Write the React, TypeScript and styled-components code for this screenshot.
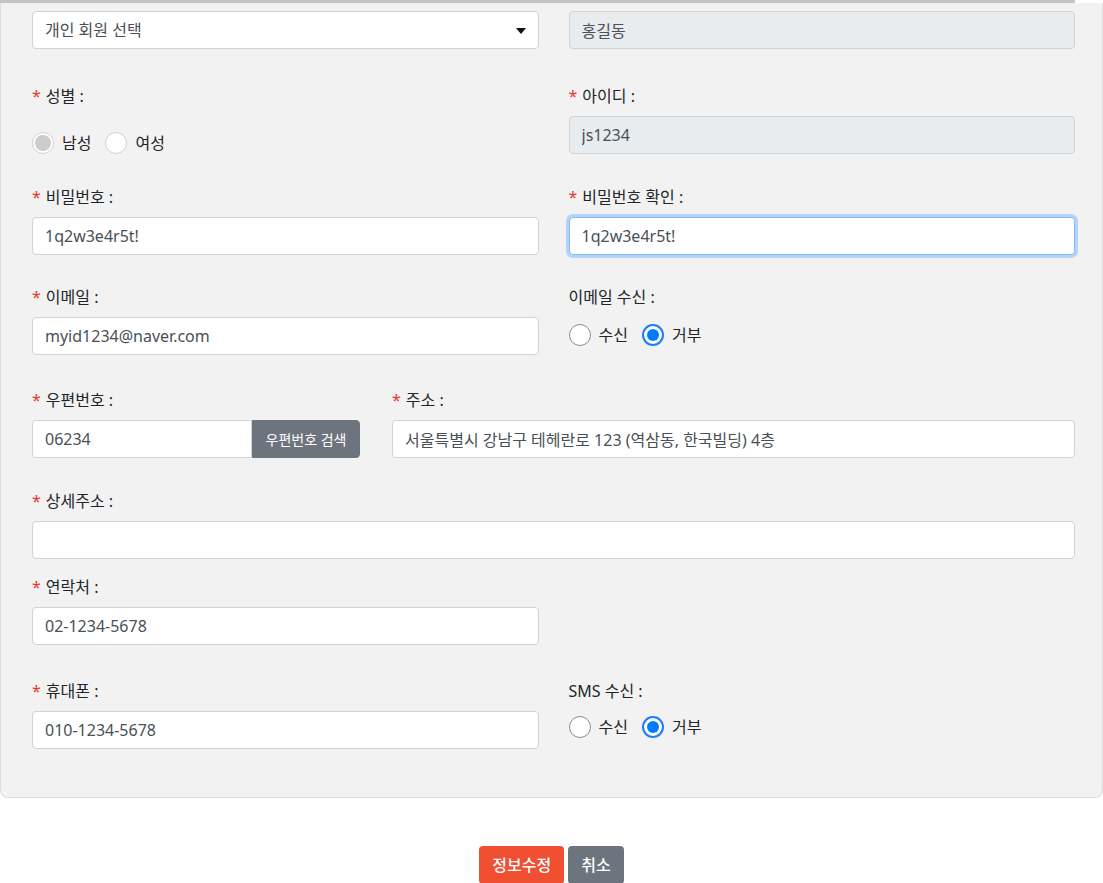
import React, { useEffect, useRef } from 'react'
import styled, { createGlobalStyle, css } from 'styled-components'

const GlobalStyle = createGlobalStyle`
  * {
    box-sizing: border-box;
  }
  body {
    margin: 0;
    background: #ffffff;
    font-family: 'Noto Sans', 'Noto Sans CJK KR', sans-serif;
    color: #212529;
  }
`

type RadioOption = {
  label: string
  checked?: boolean
}

const Radios: React.FC<{ options: RadioOption[]; disabled?: boolean; top: number }> = ({
  options,
  disabled = false,
  top,
}) => (
  <RadioRow $top={top}>
    {options.map((o) => (
      <RadioItem key={o.label}>
        <RadioMark $checked={!!o.checked} $disabled={disabled} />
        <span>{o.label}</span>
      </RadioItem>
    ))}
  </RadioRow>
)

const Label: React.FC<{ required?: boolean; children: React.ReactNode }> = ({ required, children }) => (
  <FieldLabel>
    {required && <Required>*</Required>}
    {children}
  </FieldLabel>
)

const App: React.FC = () => {
  const confirmRef = useRef<HTMLInputElement>(null)

  useEffect(() => {
    const el = confirmRef.current
    if (el) {
      el.focus()
      el.setSelectionRange(el.value.length, el.value.length)
    }
  }, [])

  return (
    <>
      <GlobalStyle />
      <TopStrip />
      <Panel>
        <Row $space={35}>
          <Field>
            <SelectWrap>
              <Select defaultValue="a">
                <option value="a">개인 회원 선택</option>
              </Select>
              <Arrow width="10" height="6" viewBox="0 0 10 6">
                <path d="M0 0h10L5 6z" fill="#111" />
              </Arrow>
            </SelectWrap>
          </Field>
          <Field>
            <TextInput disabled defaultValue="홍길동" $disabled />
          </Field>
        </Row>

        <Row $space={31}>
          <Field>
            <Label required>성별 :</Label>
            <Radios
              disabled
              top={24}
              options={[{ label: '남성', checked: true }, { label: '여성' }]}
            />
          </Field>
          <Field>
            <Label required>아이디 :</Label>
            <TextInput disabled defaultValue="js1234" $disabled />
          </Field>
        </Row>

        <Row $space={30}>
          <Field>
            <Label required>비밀번호 :</Label>
            <TextInput defaultValue="1q2w3e4r5t!" />
          </Field>
          <Field>
            <Label required>비밀번호 확인 :</Label>
            <TextInput ref={confirmRef} defaultValue="1q2w3e4r5t!" $focused />
          </Field>
        </Row>

        <Row $space={33}>
          <Field>
            <Label required>이메일 :</Label>
            <TextInput defaultValue="myid1234@naver.com" />
          </Field>
          <Field>
            <Label>이메일 수신 :</Label>
            <Radios top={15} options={[{ label: '수신' }, { label: '거부', checked: true }]} />
          </Field>
        </Row>

        <Row $space={31} $cols="328px 1fr" $gap={32}>
          <Field>
            <Label required>우편번호 :</Label>
            <InputGroup>
              <TextInput defaultValue="06234" $joined />
              <GroupButton type="button">우편번호 검색</GroupButton>
            </InputGroup>
          </Field>
          <Field>
            <Label required>주소 :</Label>
            <TextInput defaultValue="서울특별시 강남구 테헤란로 123 (역삼동, 한국빌딩) 4층" />
          </Field>
        </Row>

        <Row $space={16} $cols="1fr">
          <Field>
            <Label required>상세주소 :</Label>
            <TextInput defaultValue="" />
          </Field>
        </Row>

        <Row $space={34}>
          <Field>
            <Label required>연락처 :</Label>
            <TextInput defaultValue="02-1234-5678" />
          </Field>
          <Field />
        </Row>

        <Row $space={0}>
          <Field>
            <Label required>휴대폰 :</Label>
            <TextInput defaultValue="010-1234-5678" />
          </Field>
          <Field>
            <Label>SMS 수신 :</Label>
            <Radios top={13} options={[{ label: '수신' }, { label: '거부', checked: true }]} />
          </Field>
        </Row>
      </Panel>

      <ButtonBar>
        <ActionButton type="button" $variant="primary">
          정보수정
        </ActionButton>
        <ActionButton type="button" $variant="secondary">
          취소
        </ActionButton>
      </ButtonBar>
    </>
  )
}

const TopStrip = styled.div`
  height: 3px;
  margin-right: 28px;
  background: #c4c4c4;
`

const Panel = styled.div`
  background: #f2f2f2;
  border: 1px solid #dcdcdc;
  border-top: none;
  border-radius: 0 0 8px 8px;
  padding: 8px 27px 48px 31px;
`

const Row = styled.div<{ $space: number; $cols?: string; $gap?: number }>`
  display: grid;
  grid-template-columns: ${(p) => p.$cols || '1fr 1fr'};
  column-gap: ${(p) => (p.$gap ?? 30)}px;
  margin-bottom: ${(p) => p.$space}px;
`

const Field = styled.div`
  display: flex;
  flex-direction: column;
  min-width: 0;
`

const FieldLabel = styled.label`
  display: block;
  font-size: 16px;
  line-height: 24px;
  color: #212529;
  margin-bottom: 8px;
`

const Required = styled.span`
  color: #e8372c;
  margin-right: 5px;
`

const TextInput = styled.input<{ $disabled?: boolean; $focused?: boolean; $joined?: boolean }>`
  display: block;
  width: 100%;
  height: 38px;
  padding: 6px 12px;
  font-family: inherit;
  font-size: 16px;
  line-height: 24px;
  color: #495057;
  background: #ffffff;
  border: 1px solid #ced4da;
  border-radius: 4px;
  outline: none;
  caret-color: #212529;

  ${(p) =>
    p.$disabled &&
    css`
      background: #e9ecef;
      opacity: 1;
      -webkit-text-fill-color: #495057;
    `}

  ${(p) =>
    p.$focused &&
    css`
      border-color: #80bdff;
      box-shadow: 0 0 0 3px rgba(0, 123, 255, 0.25);
    `}

  ${(p) =>
    p.$joined &&
    css`
      flex: 1;
      border-radius: 4px 0 0 4px;
    `}
`

const SelectWrap = styled.div`
  position: relative;
`

const Select = styled.select`
  display: block;
  width: 100%;
  height: 38px;
  padding: 6px 12px;
  font-family: inherit;
  font-size: 16px;
  color: #495057;
  background: #ffffff;
  border: 1px solid #ced4da;
  border-radius: 4px;
  appearance: none;
  outline: none;
`

const Arrow = styled.svg`
  position: absolute;
  right: 13px;
  top: 17px;
  pointer-events: none;
`

const InputGroup = styled.div`
  display: flex;
`

const GroupButton = styled.button`
  flex: 0 0 108px;
  height: 38px;
  padding: 0 10px;
  font-family: inherit;
  font-size: 14px;
  color: #ffffff;
  background: #6c757d;
  border: 1px solid #6c757d;
  border-radius: 0 4px 4px 0;
  white-space: nowrap;
`

const RadioRow = styled.div<{ $top: number }>`
  display: flex;
  align-items: center;
  gap: 14px;
  margin-top: ${(p) => p.$top - 8}px;
  height: 22px;
`

const RadioItem = styled.label`
  display: flex;
  align-items: center;
  gap: 8px;
  font-size: 16px;
  line-height: 22px;
  color: #212529;
`

const RadioMark = styled.span<{ $checked: boolean; $disabled: boolean }>`
  position: relative;
  width: 22px;
  height: 22px;
  border-radius: 50%;
  background: #ffffff;
  border: 1px solid ${(p) => (p.$disabled ? '#d2d2d2' : p.$checked ? '#1a7cff' : '#8c8c8c')};

  ${(p) =>
    p.$checked &&
    css`
      &::after {
        content: '';
        position: absolute;
        inset: ${p.$disabled ? 2 : 3}px;
        border-radius: 50%;
        background: ${p.$disabled ? '#cccccc' : '#007bff'};
      }
    `}

  ${(p) =>
    p.$checked &&
    !p.$disabled &&
    css`
      border-width: 2px;
    `}
`

const ButtonBar = styled.div`
  display: flex;
  justify-content: center;
  gap: 4px;
  margin-top: 48px;
`

const ActionButton = styled.button<{ $variant: 'primary' | 'secondary' }>`
  height: 38px;
  padding: 0 13px;
  font-family: inherit;
  font-size: 16px;
  font-weight: 500;
  line-height: 24px;
  color: #ffffff;
  border: none;
  border-radius: 4px;
  background: ${(p) => (p.$variant === 'primary' ? '#f04f31' : '#6c757d')};
`

export default App
